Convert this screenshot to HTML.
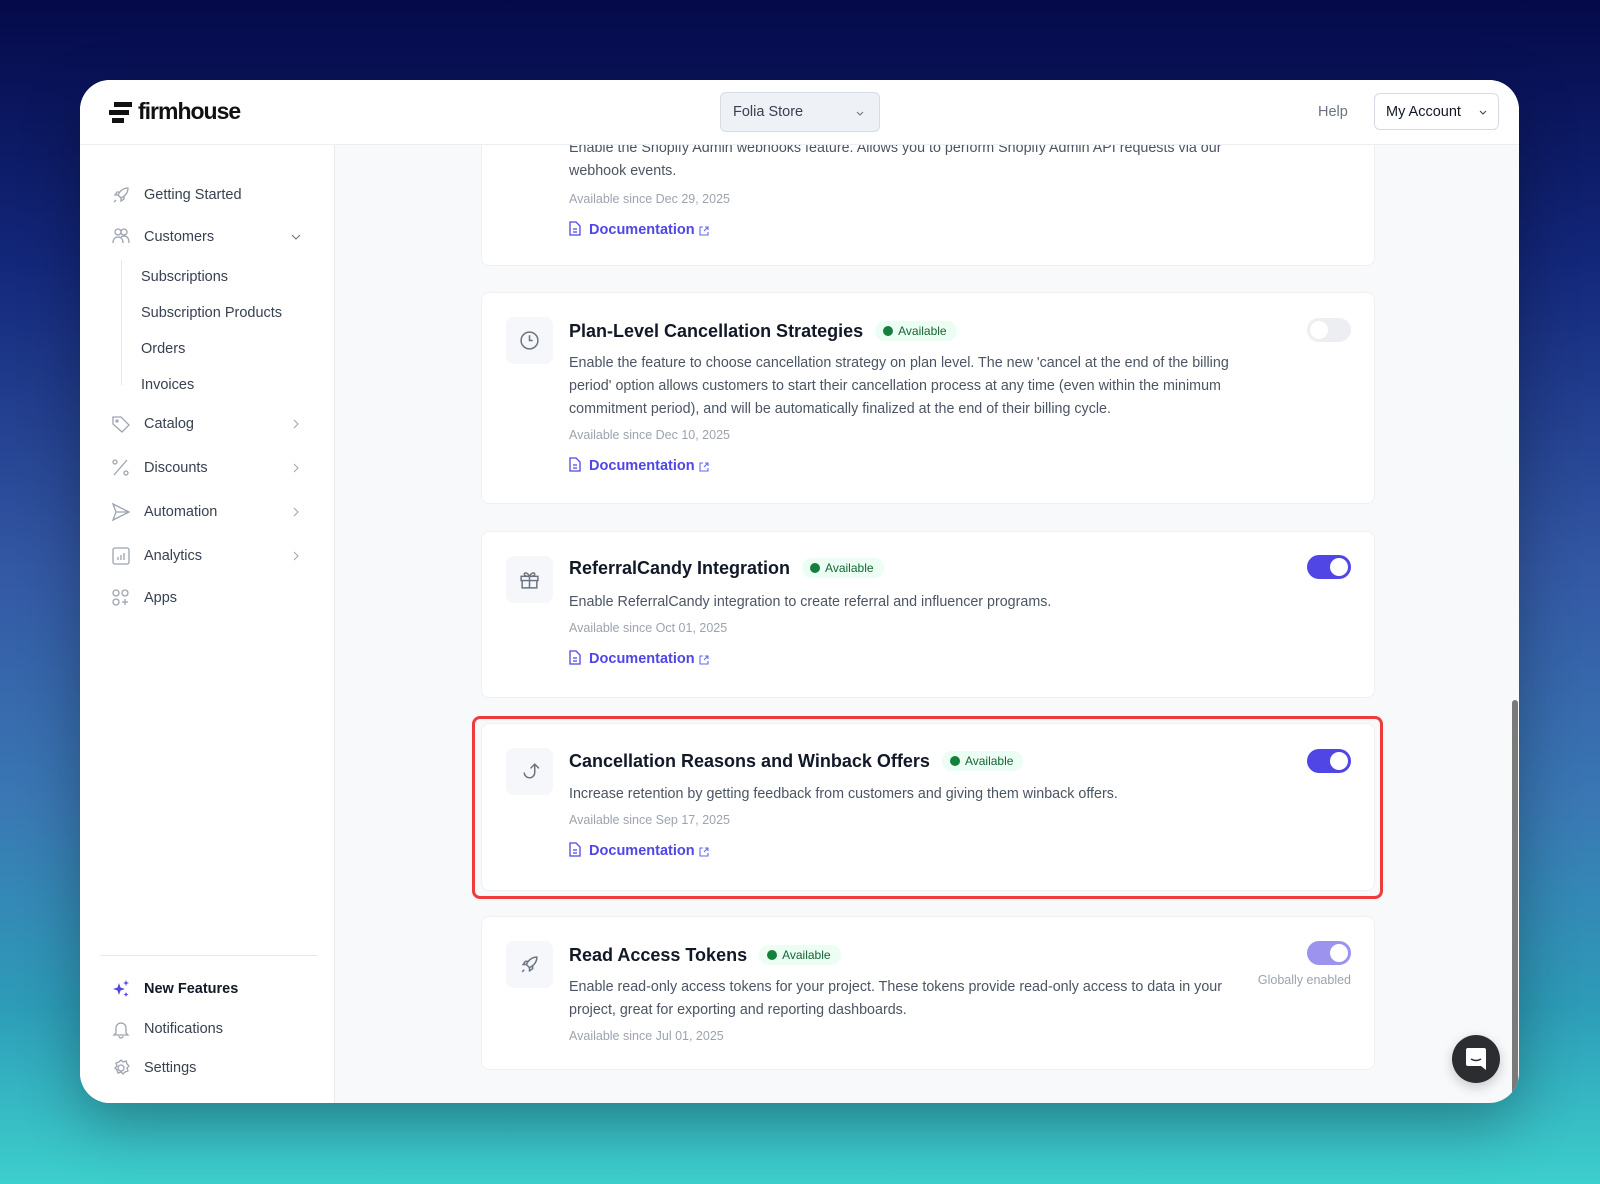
<!DOCTYPE html>
<html><head><meta charset="utf-8"><style>
*{box-sizing:border-box;margin:0;padding:0}
body{width:1600px;height:1184px;overflow:hidden;font-family:"Liberation Sans",sans-serif;background:linear-gradient(180deg,#050a4a 0%,#13277a 22%,#3358a4 48%,#3a78b4 68%,#2d9cb8 85%,#3dcfcc 100%);position:relative}
.win{position:absolute;left:80px;top:80px;width:1439px;height:1023px;border-radius:30px;background:#f8f9fb;overflow:hidden;box-shadow:0 20px 60px rgba(0,0,0,.3)}
.hdr{position:absolute;left:0;top:0;width:100%;height:65px;background:#fff;border-bottom:1px solid #eceef2;z-index:5}
.side{position:absolute;left:0;top:65px;width:255px;bottom:0;background:#fff;border-right:1px solid #e8eaee}
.a{position:absolute;white-space:nowrap}
.nav{position:absolute;left:64px;font-size:14.5px;color:#374151}
.ico{position:absolute;left:31px;width:20px;height:20px}
.chev{position:absolute;left:210px;width:12px;height:12px}
.card{position:absolute;left:401px;width:894px;background:#fff;border:1px solid #eef0f3;border-radius:8px}
.ib{position:absolute;left:24px;width:47px;height:47px;background:#f5f7fa;border-radius:8px}
.ttl{position:absolute;left:87px;font-size:18px;font-weight:bold;color:#111827;white-space:nowrap}
.bdg{display:inline-block;margin-left:12px;vertical-align:2px;background:#ecfdf3;color:#166534;font-size:12px;font-weight:normal;padding:3px 10px 3px 8px;border-radius:10px}
.bdg i{display:inline-block;width:10px;height:10px;border-radius:50%;background:#15803d;margin-right:5px;vertical-align:-1px}
.desc{position:absolute;left:87px;font-size:14.3px;color:#4b5563;line-height:23px;width:700px}
.av{position:absolute;left:87px;font-size:12.5px;color:#9ca3af}
.doc{position:absolute;left:87px;font-size:14.5px;color:#4f46e5;font-weight:bold;white-space:nowrap}
.doc svg{vertical-align:-2px}
.tg{position:absolute;right:23px;width:44px;height:24px;border-radius:12px;background:#4f46e5}
.tg::after{content:"";position:absolute;right:3px;top:3px;width:18px;height:18px;border-radius:50%;background:#fff}
.tg.off{background:#eceef2}.tg.off::after{left:3px;right:auto}
</style></head><body>
<div class="win">
 <div class="hdr">
  <svg class="a" style="left:29px;top:22px" width="24" height="22" viewBox="0 0 24 22"><path d="M5 0h18v5H5zM0 8h20v5H0zM3 16h12v5H3z" fill="#111"/></svg>
  <div class="a" style="left:58px;top:18px;font-size:23px;font-weight:bold;color:#111;letter-spacing:-1px">firmhouse</div>
  <div class="a" style="left:640px;top:12px;width:160px;height:40px;border:1px solid #d6dbe3;border-radius:6px;background:#eef1f6"><span class="a" style="left:12px;top:11px;font-size:14.5px;color:#374151">Folia Store</span><svg class="a" style="left:134px;top:15px" width="10" height="10" viewBox="0 0 10 10"><path d="M2 4l3 3 3-3" stroke="#6b7280" fill="none"/></svg></div>
  <div class="a" style="left:1238px;top:24px;font-size:14.5px;color:#6b7280">Help</div>
  <div class="a" style="left:1294px;top:13px;width:125px;height:37px;border:1px solid #d6dbe3;border-radius:6px;background:#fff"><span class="a" style="left:11px;top:10px;font-size:14.5px;color:#111827">My Account</span><svg class="a" style="left:103px;top:13px" width="10" height="10" viewBox="0 0 10 10"><path d="M2 4l3 3 3-3" stroke="#374151" fill="none"/></svg></div>
 </div>
 <div class="side">
  <svg class="ico" style="top:40px" viewBox="0 0 20 20" fill="none" stroke="#9ca3af" stroke-width="1.3"><path d="M17 3c-5 0-8 3-10 7l3 3c4-2 7-5 7-10zM7 10l-3 0 2-3h3M10 13v3l3-2v-3M5 15l-2 2"/></svg>
  <div class="nav" style="top:42px">Getting Started</div>
  <svg class="ico" style="top:81px" viewBox="0 0 20 20" fill="none" stroke="#9ca3af" stroke-width="1.3"><circle cx="7" cy="6" r="3"/><circle cx="13" cy="6" r="3"/><path d="M2 17c0-4 2-6 5-6s5 2 5 6M10 11c1-1 2-1 3-1 3 0 5 2 5 7"/></svg>
  <div class="nav" style="top:84px">Customers</div>
  <svg class="chev" style="top:86px" viewBox="0 0 12 12"><path d="M2 4l4 4 4-4" stroke="#6b7280" fill="none"/></svg>
  <div class="a" style="left:41px;top:115px;width:1px;height:125px;background:#e5e7eb"></div>
  <div class="nav" style="left:61px;top:124px">Subscriptions</div>
  <div class="nav" style="left:61px;top:160px">Subscription Products</div>
  <div class="nav" style="left:61px;top:196px">Orders</div>
  <div class="nav" style="left:61px;top:232px">Invoices</div>
  <svg class="ico" style="top:269px" viewBox="0 0 20 20" fill="none" stroke="#9ca3af" stroke-width="1.3"><path d="M2 3h8l8 8-7 7-9-8z"/><circle cx="6" cy="7" r="1"/></svg>
  <div class="nav" style="top:271px">Catalog</div>
  <svg class="chev" style="top:273px" viewBox="0 0 12 12"><path d="M4 2l4 4-4 4" stroke="#9ca3af" fill="none"/></svg>
  <svg class="ico" style="top:313px" viewBox="0 0 20 20" fill="none" stroke="#9ca3af" stroke-width="1.3"><circle cx="4" cy="4" r="2"/><circle cx="15" cy="15" r="2"/><path d="M16 2L3 17"/></svg>
  <div class="nav" style="top:315px">Discounts</div>
  <svg class="chev" style="top:317px" viewBox="0 0 12 12"><path d="M4 2l4 4-4 4" stroke="#9ca3af" fill="none"/></svg>
  <svg class="ico" style="top:357px" viewBox="0 0 20 20" fill="none" stroke="#9ca3af" stroke-width="1.3"><path d="M2 2l16 8-16 8 3-8zM5 10h13"/></svg>
  <div class="nav" style="top:359px">Automation</div>
  <svg class="chev" style="top:361px" viewBox="0 0 12 12"><path d="M4 2l4 4-4 4" stroke="#9ca3af" fill="none"/></svg>
  <svg class="ico" style="top:401px" viewBox="0 0 20 20" fill="none" stroke="#9ca3af" stroke-width="1.3"><rect x="2" y="2" width="16" height="16" rx="2"/><path d="M7 14v-3M10 14v-5M13 14v-7"/></svg>
  <div class="nav" style="top:403px">Analytics</div>
  <svg class="chev" style="top:405px" viewBox="0 0 12 12"><path d="M4 2l4 4-4 4" stroke="#9ca3af" fill="none"/></svg>
  <svg class="ico" style="top:443px" viewBox="0 0 20 20" fill="none" stroke="#9ca3af" stroke-width="1.3"><circle cx="5" cy="5" r="3"/><circle cx="14" cy="5" r="3"/><circle cx="5" cy="14" r="3"/><path d="M14 11v6M11 14h6"/></svg>
  <div class="nav" style="top:445px">Apps</div>
  <div class="a" style="left:20px;top:810px;width:217px;height:1px;background:#e5e7eb"></div>
  <svg class="ico" style="top:834px" viewBox="0 0 20 20" fill="#4f46e5"><path d="M8 4l1.5 4.5L14 10l-4.5 1.5L8 16l-1.5-4.5L2 10l4.5-1.5z"/><path d="M15 1l.8 2.2L18 4l-2.2.8L15 7l-.8-2.2L12 4l2.2-.8zM15 13l.7 1.8 1.8.7-1.8.7-.7 1.8-.7-1.8-1.8-.7 1.8-.7z"/></svg>
  <div class="nav" style="top:836px;font-weight:bold;color:#111827">New Features</div>
  <svg class="ico" style="top:874px" viewBox="0 0 20 20" fill="none" stroke="#9ca3af" stroke-width="1.3"><path d="M5 14V9a5 5 0 0110 0v5l2 2H3zM8 17a2 2 0 004 0"/></svg>
  <div class="nav" style="top:876px">Notifications</div>
  <svg class="ico" style="top:913px" viewBox="0 0 20 20" fill="none" stroke="#9ca3af" stroke-width="1.3"><circle cx="10" cy="10" r="3"/><path d="M10 2l2 2 3-1 1 3 2 2-2 2 1 3-3 1-2 2-2-2-3 1-1-3-2-2 2-2-1-3 3-1z"/></svg>
  <div class="nav" style="top:915px">Settings</div>
 </div>

 <div class="card" style="top:20px;height:166px">
  <div class="desc" style="top:36px;width:690px">Enable the Shopify Admin webhooks feature. Allows you to perform Shopify Admin API requests via our webhook events.</div>
  <div class="av" style="top:91px">Available since Dec 29, 2025</div>
  <div class="doc" style="top:120px"><svg width="12" height="15" viewBox="0 0 12 15" fill="none" stroke="#4f46e5" stroke-width="1.3"><path d="M1 1h6l4 4v9H1zM4 8h4M4 11h4"/></svg>&nbsp; Documentation <svg width="10" height="10" viewBox="0 0 10 10" fill="none" stroke="#6366f1" stroke-width="1.1"><path d="M4 1H1v8h8V6M6 1h3v3M9 1L5 5"/></svg></div>
 </div>

 <div class="card" style="top:212px;height:212px">
  <div class="ib" style="top:24px"><svg class="a" style="left:13px;top:13px" width="21" height="21" viewBox="0 0 20 20" fill="none" stroke="#6b7280" stroke-width="1.4"><circle cx="10" cy="10" r="8"/><path d="M10 5v5h3"/></svg></div>
  <div class="ttl" style="top:28px">Plan-Level Cancellation Strategies<span class="bdg"><i></i>Available</span></div>
  <div class="desc" style="top:59px">Enable the feature to choose cancellation strategy on plan level. The new 'cancel at the end of the billing period' option allows customers to start their cancellation process at any time (even within the minimum commitment period), and will be automatically finalized at the end of their billing cycle.</div>
  <div class="av" style="top:135px">Available since Dec 10, 2025</div>
  <div class="doc" style="top:164px"><svg width="12" height="15" viewBox="0 0 12 15" fill="none" stroke="#4f46e5" stroke-width="1.3"><path d="M1 1h6l4 4v9H1zM4 8h4M4 11h4"/></svg>&nbsp; Documentation <svg width="10" height="10" viewBox="0 0 10 10" fill="none" stroke="#6366f1" stroke-width="1.1"><path d="M4 1H1v8h8V6M6 1h3v3M9 1L5 5"/></svg></div>
  <div class="tg off" style="top:25px"></div>
 </div>

 <div class="card" style="top:451px;height:167px">
  <div class="ib" style="top:24px"><svg class="a" style="left:13px;top:13px" width="21" height="21" viewBox="0 0 20 20" fill="none" stroke="#6b7280" stroke-width="1.4"><rect x="2" y="7" width="16" height="4"/><path d="M3 11v7h14v-7M10 7v11M10 7C8 3 5 3 5 5s3 2 5 2c2 0 5 0 5-2s-3-2-5 2"/></svg></div>
  <div class="ttl" style="top:26px">ReferralCandy Integration<span class="bdg"><i></i>Available</span></div>
  <div class="desc" style="top:59px">Enable ReferralCandy integration to create referral and influencer programs.</div>
  <div class="av" style="top:89px">Available since Oct 01, 2025</div>
  <div class="doc" style="top:118px"><svg width="12" height="15" viewBox="0 0 12 15" fill="none" stroke="#4f46e5" stroke-width="1.3"><path d="M1 1h6l4 4v9H1zM4 8h4M4 11h4"/></svg>&nbsp; Documentation <svg width="10" height="10" viewBox="0 0 10 10" fill="none" stroke="#6366f1" stroke-width="1.1"><path d="M4 1H1v8h8V6M6 1h3v3M9 1L5 5"/></svg></div>
  <div class="tg" style="top:23px"></div>
 </div>

 <div class="a" style="left:392px;top:636px;width:911px;height:183px;border:3px solid #ef3b3b;border-radius:8px;z-index:3"></div>
 <div class="card" style="top:643px;height:168px">
  <div class="ib" style="top:24px"><svg class="a" style="left:13px;top:13px" width="21" height="21" viewBox="0 0 20 20" fill="none" stroke="#6b7280" stroke-width="1.4"><path d="M5 11a5 5 0 1010 0V3M11 7l4-4 4 4"/></svg></div>
  <div class="ttl" style="top:27px">Cancellation Reasons and Winback Offers<span class="bdg"><i></i>Available</span></div>
  <div class="desc" style="top:59px">Increase retention by getting feedback from customers and giving them winback offers.</div>
  <div class="av" style="top:89px">Available since Sep 17, 2025</div>
  <div class="doc" style="top:118px"><svg width="12" height="15" viewBox="0 0 12 15" fill="none" stroke="#4f46e5" stroke-width="1.3"><path d="M1 1h6l4 4v9H1zM4 8h4M4 11h4"/></svg>&nbsp; Documentation <svg width="10" height="10" viewBox="0 0 10 10" fill="none" stroke="#6366f1" stroke-width="1.1"><path d="M4 1H1v8h8V6M6 1h3v3M9 1L5 5"/></svg></div>
  <div class="tg" style="top:25px"></div>
 </div>

 <div class="card" style="top:836px;height:154px">
  <div class="ib" style="top:24px"><svg class="a" style="left:13px;top:13px" width="21" height="21" viewBox="0 0 20 20" fill="none" stroke="#6b7280" stroke-width="1.4"><path d="M17 3c-5 0-8 3-10 7l3 3c4-2 7-5 7-10zM7 10l-3 0 2-3h3M10 13v3l3-2v-3M5 15l-2 2"/></svg></div>
  <div class="ttl" style="top:28px">Read Access Tokens<span class="bdg"><i></i>Available</span></div>
  <div class="desc" style="top:59px;width:660px">Enable read-only access tokens for your project. These tokens provide read-only access to data in your project, great for exporting and reporting dashboards.</div>
  <div class="av" style="top:112px">Available since Jul 01, 2025</div>
  <div class="tg" style="top:24px;background:#9b93ee"></div>
  <div class="a" style="right:23px;top:56px;font-size:12.5px;color:#9ca3af">Globally enabled</div>
 </div>

 <div class="a" style="left:1432px;top:620px;width:6px;height:403px;background:#7a7a7a;border-radius:3px"></div>
 <div class="a" style="left:1372px;top:955px;width:48px;height:48px;border-radius:50%;background:#2b2d31;box-shadow:0 4px 12px rgba(0,0,0,.2)"><svg class="a" style="left:14px;top:13px" width="20" height="22" viewBox="0 0 20 22"><path d="M2 0h16a2 2 0 012 2v20l-5-4H2a2 2 0 01-2-2V2a2 2 0 012-2z" fill="#fff"/><path d="M5 11q5 3 10 0" stroke="#2b2d31" stroke-width="1.5" fill="none"/></svg></div>
</div>
</body></html>
